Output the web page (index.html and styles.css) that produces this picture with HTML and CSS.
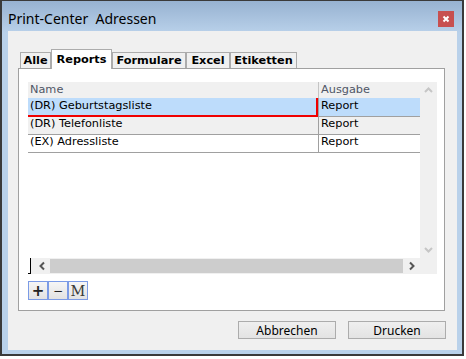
FILE: index.html
```html
<!DOCTYPE html>
<html lang="de">
<head>
  <meta charset="UTF-8" />
  <title>Print-Center Adressen</title>
  <link rel="stylesheet" href="styles.css">
</head>
<body>
  <div class="window">
    <div class="titlebar">
      <span class="title">Print-Center&nbsp; Adressen</span>
      <span class="close">
        <svg width="16" height="16" viewBox="0 0 16 16">
          <path d="M5.5 5.5 L10.5 10.5 M10.5 5.5 L5.5 10.5" stroke="#fff" stroke-width="2" fill="none" />
        </svg>
      </span>
    </div>

    <div class="client">
      <div class="tabs">
        <div class="tab w-alle">Alle</div>
        <div class="tab active w-reports">Reports</div>
        <div class="tab w-formulare">Formulare</div>
        <div class="tab w-excel">Excel</div>
        <div class="tab w-etiketten">Etiketten</div>
      </div>

      <div class="panel">
        <div class="grid">
          <div class="grid-main">
            <div class="table">
              <div class="row head">
                <div class="cell c1">Name</div>
                <div class="cell c2">Ausgabe</div>
              </div>
              <div class="row sel">
                <div class="cell c1">(DR) Geburtstagsliste</div>
                <div class="cell c2">Report</div>
              </div>
              <div class="row alt">
                <div class="cell c1">(DR) Telefonliste</div>
                <div class="cell c2">Report</div>
              </div>
              <div class="row">
                <div class="cell c1">(EX) Adressliste</div>
                <div class="cell c2">Report</div>
              </div>
            </div>
            <div class="vscroll">
              <svg width="17" height="17" viewBox="0 0 17 17">
                <polyline points="5,10 8.5,6.5 12,10" stroke="#c6c6c6" stroke-width="2" fill="none" />
              </svg>
              <svg width="17" height="17" viewBox="0 0 17 17">
                <polyline points="5,7 8.5,10.5 12,7" stroke="#c6c6c6" stroke-width="2" fill="none" />
              </svg>
            </div>
          </div>
          <div class="hscroll">
            <span class="caret"></span>
            <span class="sbtn">
              <svg width="17" height="16" viewBox="0 0 17 16">
                <polyline points="11,4.5 7.5,8 11,11.5" stroke="#555" stroke-width="2" fill="none" />
              </svg>
            </span>
            <span class="thumb"></span>
            <span class="sbtn">
              <svg width="17" height="16" viewBox="0 0 17 16">
                <polyline points="7,4.5 10.5,8 7,11.5" stroke="#555" stroke-width="2" fill="none" />
              </svg>
            </span>
            <span class="corner"></span>
          </div>
        </div>

        <div class="tools">
          <button class="tool plus">+</button>
          <button class="tool minus">&minus;</button>
          <button class="tool em">M</button>
        </div>
      </div>

      <div class="actions">
        <button class="btn">Abbrechen</button>
        <button class="btn">Drucken</button>
      </div>
    </div>
  </div>
</body>
</html>
```

FILE: styles.css
```css
body {
  margin: 0;
  background: #fff;
}

.window {
  width: 464px;
  height: 356px;
  box-sizing: border-box;
  border: 2px solid #3a3a3a;
  border-top-width: 1px;
  padding: 0 5px 4px 6px;
  background: linear-gradient(#97b2d1, #b9d1ea 32px, #b9d1ea);
  box-shadow: 0 1px 0 #3ac4e8;
}

.titlebar {
  height: 30px;
  display: flex;
  align-items: flex-start;
}

.title {
  margin-top: 8px;
  font-family: "Noto Sans", sans-serif;
  font-size: 14px;
  line-height: 20px;
  color: #000;
}

.close {
  margin: 10px 3px 0 auto;
  width: 16px;
  height: 16px;
  background: #c75050;
  display: flex;
}

.client {
  height: 319px;
  background: #f0f0f0;
  display: flex;
  flex-direction: column;
}

/* tabs */
.tabs {
  display: flex;
  align-items: flex-end;
  height: 19px;
  margin: 18px 0 0 12px;
}

.tab {
  box-sizing: border-box;
  height: 16px;
  border: 1px solid #acacac;
  border-bottom: none;
  background: #f0f0f0;
  font-family: "DejaVu Sans", Verdana, sans-serif;
  font-weight: bold;
  font-size: 11.3px;
  line-height: 15px;
  text-align: center;
  color: #000;
}

.tab.active {
  height: 20px;
  margin-bottom: -1px;
  padding-top: 2px;
  background: #fff;
  position: relative;
  z-index: 1;
}

.w-alle { width: 31px; }
.w-reports { width: 61px; }
.w-formulare { width: 74px; }
.w-excel { width: 44px; }
.w-etiketten { width: 67px; }

.panel {
  height: 243px;
  box-sizing: border-box;
  margin: 0 12px 0 10px;
  border: 1px solid #a0a0a0;
  background: #fff;
  padding: 13px 7px 10px 9px;
}

/* grid */
.grid {
  height: 192px;
  display: flex;
  flex-direction: column;
}

.grid-main {
  height: 176px;
  display: flex;
}

.table {
  width: 392px;
  font-family: "DejaVu Sans", Verdana, sans-serif;
  font-size: 11.3px;
  color: #000;
}

.row {
  display: flex;
  height: 18px;
  line-height: 14px;
}

.cell {
  box-sizing: border-box;
  padding-left: 2px;
  border-bottom: 1px solid #a0a0a0;
  white-space: nowrap;
}

.c1 { width: 290px; }
.c2 { width: 102px; border-left: 1px solid #a0a0a0; }

.row.head {
  height: 16px;
  line-height: 15px;
  background: #f0f0f0;
  color: #4f5666;
}

.row.head .cell { border-bottom: none; }
.row.head .c2 { border-left-color: #c4c4c4; }

.row.sel {
  height: 19px;
  background: #bddcfb;
}

.row.sel .cell { padding-top: 1px; }

.row.sel .c1 {
  border-bottom: 2px solid #f00000;
  border-right: 2px solid #f00000;
}

.row.alt { background: #f0f0f0; }

.vscroll {
  width: 17px;
  background: #f0f0f0;
  display: flex;
  flex-direction: column;
  justify-content: space-between;
}

.hscroll {
  height: 16px;
  display: flex;
  background: #f0f0f0;
}

.caret {
  width: 2px;
  height: 15px;
  border-right: 1px solid #000;
  border-bottom: 1px solid #000;
  margin-right: 2px;
  background: #fff;
}

.sbtn {
  width: 17px;
  display: flex;
}

.thumb {
  flex: 1;
  margin: 1px 0;
  background: #cdcdcd;
}

.corner { width: 17px; }

/* small tool buttons */
.tools {
  display: flex;
  margin-top: 7px;
}

.tool {
  width: 20px;
  height: 19px;
  box-sizing: border-box;
  margin: 0;
  padding: 0;
  border: 1px solid #7b9be6;
  background: linear-gradient(#f6f6f6, #e2e2e2);
  color: #222;
  font-family: "DejaVu Sans", sans-serif;
  font-weight: bold;
  font-size: 15px;
  line-height: 16px;
}

.tool.minus {
  font-weight: normal;
  font-size: 12px;
}

.tool.em {
  font-family: "DejaVu Serif", serif;
  font-weight: normal;
  font-size: 14.5px;
  color: #3a3a3a;
}

/* dialog buttons */
.actions {
  display: flex;
  justify-content: flex-end;
  gap: 12px;
  margin-top: 10px;
  padding-right: 11px;
}

.btn {
  width: 98px;
  height: 18px;
  box-sizing: border-box;
  margin: 0;
  padding: 0;
  border: 1px solid #acacac;
  background: linear-gradient(#efefef, #e3e3e3);
  font-family: "Noto Sans", sans-serif;
  font-size: 12px;
  line-height: 15px;
  color: #000;
}
```
